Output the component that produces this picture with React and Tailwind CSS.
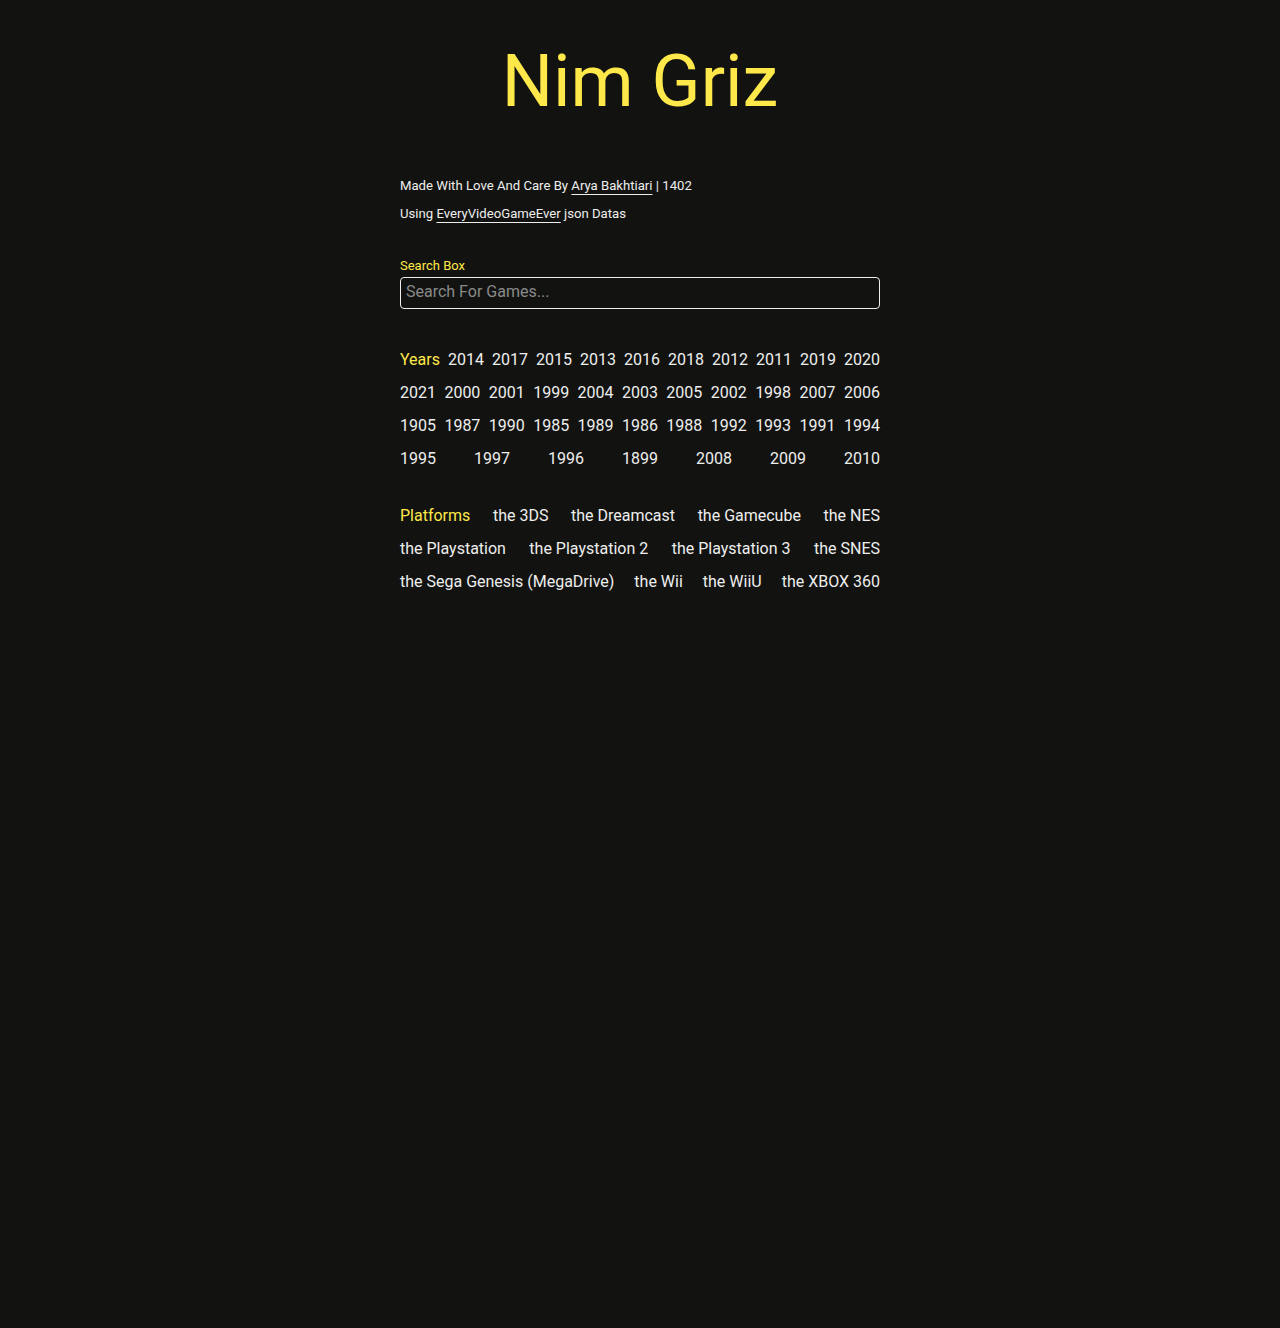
import React, { useState } from 'react';

const years = [
  '2014', '2017', '2015', '2013', '2016', '2018', '2012', '2011', '2019', '2020',
  '2021', '2000', '2001', '1999', '2004', '2003', '2005', '2002', '1998', '2007', '2006',
  '1905', '1987', '1990', '1985', '1989', '1986', '1988', '1992', '1993', '1991', '1994',
  '1995', '1997', '1996', '1899', '2008', '2009', '2010',
];

const platforms = [
  'the 3DS', 'the Dreamcast', 'the Gamecube', 'the NES',
  'the Playstation', 'the Playstation 2', 'the Playstation 3', 'the SNES',
  'the Sega Genesis (MegaDrive)', 'the Wii', 'the WiiU', 'the XBOX 360',
];

export default function App() {
  const [query, setQuery] = useState('');

  return (
    <div className="min-h-screen bg-[#121310] text-[#eeeeee] font-['Roboto',sans-serif]">
      <main className="w-[480px] mx-auto pb-20">
        <h1 className="pt-[46px] text-center text-[72px] leading-none text-[#ffe84a]">Nim Griz</h1>

        <div className="mt-[54px] text-[13.15px]">
          <p className="leading-[28px]">
            Made With Love And Care By{' '}
            <a href="#" className="underline underline-offset-[4px] decoration-1">Arya Bakhtiari</a> | 1402
          </p>
          <p className="leading-[28px]">
            Using{' '}
            <a href="#" className="underline underline-offset-[4px] decoration-1">EveryVideoGameEver</a> json Datas
          </p>
        </div>

        <div className="mt-[30px]">
          <label className="block text-[13px] leading-4 text-[#ffe84a]">Search Box</label>
          <input
            value={query}
            onChange={(e) => setQuery(e.target.value)}
            placeholder="Search For Games..."
            className="mt-[3px] w-full h-8 px-[5px] pb-1 bg-transparent border border-[#eeeeee] rounded text-base text-[#eeeeee] placeholder:text-[#8a8a8a] outline-none"
          />
        </div>

        {/* years */}
        <div className="mt-[39px] flex flex-wrap justify-between gap-x-2 gap-y-[9px] text-base leading-6">
          <span className="text-[#ffe84a]">Years</span>
          {years.map((y) => (
            <a key={y} href="#">{y}</a>
          ))}
        </div>

        {/* platforms */}
        <div className="mt-[33px] flex flex-wrap justify-between gap-x-4 gap-y-[9px] text-base leading-6">
          <span className="text-[#ffe84a]">Platforms</span>
          {platforms.map((p) => (
            <a key={p} href="#">{p}</a>
          ))}
        </div>
      </main>
    </div>
  );
}
